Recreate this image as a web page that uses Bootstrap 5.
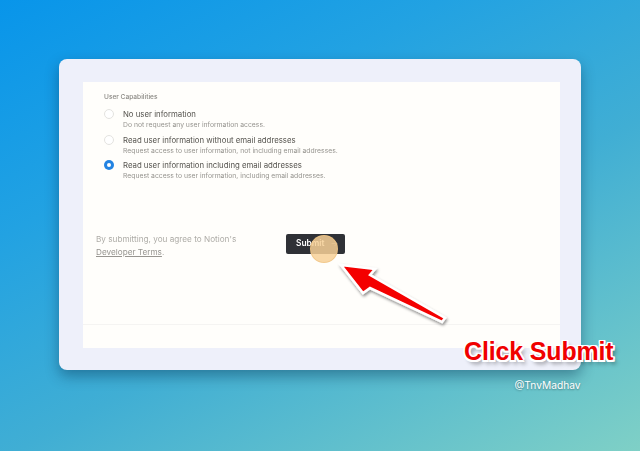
<!DOCTYPE html>
<html lang="en">
<head>
<meta charset="utf-8">
<title>Click Submit</title>
<link href="https://cdn.jsdelivr.net/npm/bootstrap@5.3.0/dist/css/bootstrap.min.css" rel="stylesheet">
<style>
html,body{height:451px;overflow:hidden}
body{position:relative;width:640px;font-family:Inter,"Liberation Sans",sans-serif;background:linear-gradient(152deg,#0895ea 0%,#22a2e2 30%,#40aed4 58%,#7fd0c6 100%)}
.stage{padding:59px 59px 0}
.win{width:522px;height:311px;background:#eef0fa;border-radius:8px;padding:23px 21px 22px 24px;box-shadow:0 6px 14px rgba(0,40,70,.4)}
.sheet{height:100%;background:#fffefb;display:flex;flex-direction:column}
.body-area{flex:1;padding:11px 21px 0;filter:blur(.25px)}
.cap{font-size:6.6px;color:#8a8883;line-height:8px;margin-bottom:8px;font-weight:500}
.opt{display:flex;gap:9px;height:25.5px}
.dot{width:10px;height:10px;border-radius:50%;border:1px solid #e3e2df;background:#fff;margin-top:0;flex:none}
.dot.on{border:none;box-shadow:inset 0 0 0 3px #2383e2}
.t1{font-size:7.8px;line-height:11px;color:#55534e}
.t2{font-size:6.8px;line-height:10px;color:#96948f}
.foot{margin:47px 0 0 -8px;display:flex;align-items:flex-start}
.terms{width:190px;font-size:8.2px;line-height:13px;color:#aeaca7}
.terms u{color:#979590}
.go{width:59px;height:20px;margin-top:1px;background:#2f3136;color:#fff;font-size:8.4px;font-weight:600;border-radius:2px;padding:0 0 0 10px;display:flex;align-items:center;border:0}
.go i{font-style:normal;margin-left:6px;color:#777}
.rule{height:24px;border-top:1px solid #f5f4f2}
.ring{position:absolute;left:310px;top:235px;width:28px;height:28px;border-radius:50%;background:rgba(247,208,150,.85);border:1px solid rgba(240,195,130,.7)}
.arrow{position:absolute;left:330px;top:255px}
.call{position:absolute;left:464px;top:337px;font-family:"Liberation Sans",sans-serif;font-weight:700;font-size:24.9px;line-height:28px;color:#f00000;white-space:nowrap;letter-spacing:-.1px;text-shadow:-1.5px -1.5px 0 #fff,1.5px -1.5px 0 #fff,-1.5px 1.5px 0 #fff,1.5px 1.5px 0 #fff,0 -1.5px 0 #fff,0 1.5px 0 #fff,-1.5px 0 0 #fff,1.5px 0 0 #fff,3px 4px 4px rgba(0,0,0,.4)}
.sig{position:absolute;left:514.5px;top:379px;font-size:10.2px;line-height:13px;color:#fff;text-shadow:0 1px 2px rgba(0,0,0,.35)}
</style>
</head>
<body>
<div class="stage">
  <div class="win">
    <div class="sheet">
      <div class="body-area">
        <div class="cap">User Capabilities</div>
        <div class="opt"><span class="dot"></span><div><div class="t1">No user information</div><div class="t2">Do not request any user information access.</div></div></div>
        <div class="opt"><span class="dot"></span><div><div class="t1">Read user information without email addresses</div><div class="t2">Request access to user information, not including email addresses.</div></div></div>
        <div class="opt"><span class="dot on"></span><div><div class="t1">Read user information including email addresses</div><div class="t2">Request access to user information, including email addresses.</div></div></div>
        <div class="foot">
          <div class="terms">By submitting, you agree to Notion's<br><u>Developer Terms</u>.</div>
          <button class="go" type="button">Submit<i>→</i></button>
        </div>
      </div>
      <div class="rule"></div>
    </div>
  </div>
</div>
<span class="ring"></span>
<svg class="arrow" width="125" height="80" viewBox="0 0 125 80" aria-hidden="true">
  <defs><filter id="sh" x="-20%" y="-20%" width="140%" height="140%"><feDropShadow dx="1" dy="2" stdDeviation="1.5" flood-color="#000" flood-opacity=".45"/></filter></defs>
  <path d="M11 10 L45 14 L40 20 L115 63 L112 67 L40 33 L33 38 Z" fill="#f40000" stroke="#fff" stroke-width="2.5" stroke-linejoin="miter" filter="url(#sh)"/>
</svg>
<div class="call">Click Submit</div>
<div class="sig">@TnvMadhav</div>
<script src="https://cdn.jsdelivr.net/npm/bootstrap@5.3.0/dist/js/bootstrap.bundle.min.js"></script>
</body>
</html>
